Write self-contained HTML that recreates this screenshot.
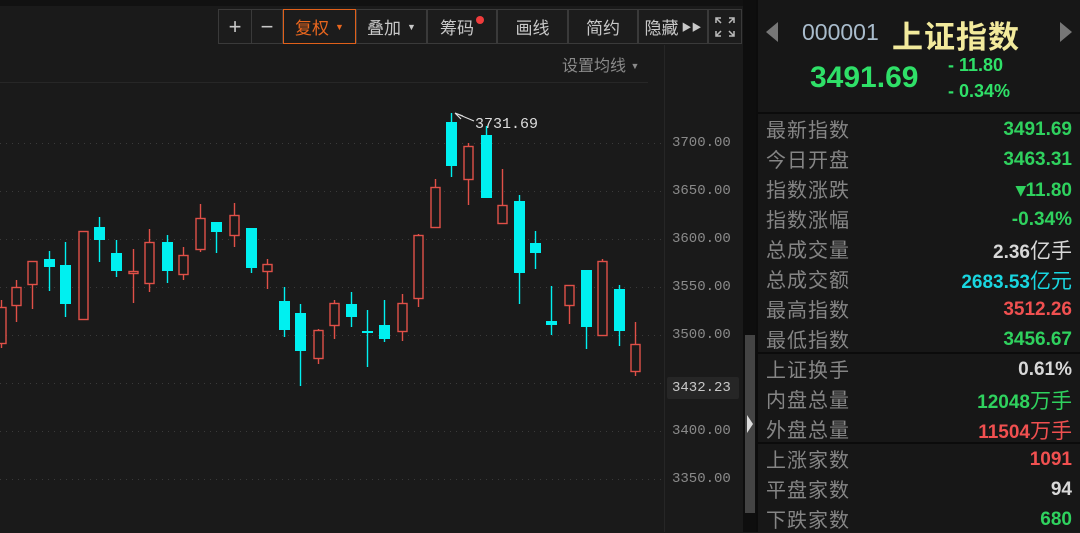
<!DOCTYPE html>
<html><head><meta charset="utf-8">
<style>
*{margin:0;padding:0;box-sizing:border-box}
body{width:1080px;height:532px;background:#1a1a1a;overflow:hidden;position:relative;font-family:"Liberation Sans","Noto Sans CJK SC",sans-serif}
.topbar{position:absolute;left:0;top:0;width:745px;height:6px;background:#111}
.tb{position:absolute;top:9px;height:35px;border:1px solid #3a3a3a;background:#1c1c1c;color:#c8c8c8;font-size:17px;display:flex;align-items:center;justify-content:center}
.tb.sel{border:1px solid #e0601a;color:#e8661e}
.caret{font-size:9px;margin-left:6px}
.ax{position:absolute;left:672px;color:#8a8a8a;font-family:"Liberation Mono",monospace;font-size:14px}
.rp{position:absolute;left:756px;top:0;width:324px;height:532px;background:#171717;border-left:2px solid #0c0c0c}
.row{position:absolute;left:8px;width:306px;height:30px;display:flex;justify-content:space-between;align-items:center}
.lb{color:#858585;font-size:20px;letter-spacing:1px}
.v{font-size:19px;font-weight:bold;position:relative;top:2px;font-family:"Liberation Sans","Noto Sans CJK SC",sans-serif}
.v span{vertical-align:baseline}
.g{color:#2fd15e}.r{color:#f05050}.w{color:#d8d8d8}.c{color:#19d6e0}
.sep{position:absolute;left:0;width:324px;height:2px;background:#0b0b0b}
</style></head><body>
<div class="topbar"></div>
<div class="tb" style="left:218px;width:34px;font-size:22px">+</div>
<div class="tb" style="left:251px;width:32px;font-size:22px">−</div>
<div class="tb sel" style="left:283px;width:73px">复权<span class="caret">▼</span></div>
<div class="tb" style="left:356px;width:71px">叠加<span class="caret">▼</span></div>
<div class="tb" style="left:427px;width:70px">筹码<span style="display:inline-block;width:8px;height:8px;border-radius:50%;background:#f03c3c;margin-left:2px;position:relative;top:-7px"></span></div>
<div class="tb" style="left:497px;width:71px">画线</div>
<div class="tb" style="left:568px;width:70px">简约</div>
<div class="tb" style="left:638px;width:70px">隐藏<span style="font-size:10px;margin-left:3px">▶▶</span></div>
<div class="tb" style="left:708px;width:34px">
<svg width="22" height="22" viewBox="0 0 22 22" stroke="#bbb" stroke-width="1.5" fill="none"><path d="M2 7V2h5M2 2l5 5M15 2h5v5M20 2l-5 5M2 15v5h5M2 20l5-5M15 20h5v-5M20 20l-5-5"/></svg></div>
<div style="position:absolute;left:562px;top:52px;color:#8a8a8a;font-size:16px">设置均线 <span style="font-size:9px;position:relative;top:-2px">▼</span></div>
<div style="position:absolute;left:0;top:82px;width:648px;height:1px;background:#272727"></div>
<div style="position:absolute;left:664px;top:45px;width:1px;height:487px;background:#262626"></div>
<div style="position:absolute;left:743px;top:0;width:14px;height:532px;background:#0e0e0e"></div>
<div style="position:absolute;left:745px;top:335px;width:10px;height:178px;background:#444"></div>
<div style="position:absolute;left:747px;top:415px;width:0;height:0;border-top:9px solid transparent;border-bottom:9px solid transparent;border-left:6px solid #ddd"></div>

<svg id="ch" style="position:absolute;left:0;top:0" width="665" height="532"></svg>
<div class="ax" style="top:135px">3700.00</div>
<div class="ax" style="top:183px">3650.00</div>
<div class="ax" style="top:231px">3600.00</div>
<div class="ax" style="top:279px">3550.00</div>
<div class="ax" style="top:327px">3500.00</div>
<div style="position:absolute;left:667px;top:377px;width:72px;height:22px;background:#262626;border-radius:2px"></div>
<div class="ax" style="top:380px;color:#c8c8c8">3432.23</div>
<div class="ax" style="top:423px">3400.00</div>
<div class="ax" style="top:471px">3350.00</div>

<div class="rp">
<div style="position:absolute;left:8px;top:22px;width:0;height:0;border-top:10px solid transparent;border-bottom:10px solid transparent;border-right:12px solid #777"></div>
<div style="position:absolute;left:302px;top:22px;width:0;height:0;border-top:10px solid transparent;border-bottom:10px solid transparent;border-left:12px solid #777"></div>
<div style="position:absolute;left:44px;top:19px;color:#a9bccc;font-size:23px">000001</div>
<div style="position:absolute;left:134px;top:12px;color:#f2ea9c;font-size:31px;font-weight:bold;letter-spacing:1px">上证指数</div>
<div style="position:absolute;left:52px;top:61px;color:#2fe068;font-size:30px;font-weight:bold">3491.69</div>
<div style="position:absolute;left:190px;top:55px;color:#2fe068;font-size:18px;font-weight:bold">- 11.80</div>
<div style="position:absolute;left:190px;top:81px;color:#2fe068;font-size:18px;font-weight:bold">- 0.34%</div>
<div class="sep" style="top:112px"></div>
<div class="row" style="top:113px"><span class="lb">最新指数</span><span class="v g">3491.69</span></div>
<div class="row" style="top:143px"><span class="lb">今日开盘</span><span class="v g">3463.31</span></div>
<div class="row" style="top:173px"><span class="lb">指数涨跌</span><span class="v g">▾11.80</span></div>
<div class="row" style="top:203px"><span class="lb">指数涨幅</span><span class="v g">-0.34%</span></div>
<div class="row" style="top:233px"><span class="lb">总成交量</span><span class="v w">2.36<span style="font-weight:normal;font-size:21px">亿手</span></span></div>
<div class="row" style="top:263px"><span class="lb">总成交额</span><span class="v c">2683.53<span style="font-weight:normal;font-size:21px">亿元</span></span></div>
<div class="row" style="top:293px"><span class="lb">最高指数</span><span class="v r">3512.26</span></div>
<div class="row" style="top:323px"><span class="lb">最低指数</span><span class="v g">3456.67</span></div>
<div class="sep" style="top:352px"></div>
<div class="row" style="top:353px"><span class="lb">上证换手</span><span class="v w">0.61%</span></div>
<div class="row" style="top:383px"><span class="lb">内盘总量</span><span class="v g">12048<span style="font-weight:normal;font-size:21px">万手</span></span></div>
<div class="row" style="top:413px"><span class="lb">外盘总量</span><span class="v r">11504<span style="font-weight:normal;font-size:21px">万手</span></span></div>
<div class="sep" style="top:442px"></div>
<div class="row" style="top:443px"><span class="lb">上涨家数</span><span class="v r">1091</span></div>
<div class="row" style="top:473px"><span class="lb">平盘家数</span><span class="v w">94</span></div>
<div class="row" style="top:503px"><span class="lb">下跌家数</span><span class="v g">680</span></div>
</div>

<script>
var d=[
[1,'r',307,343,300,348],[16,'r',287,305,280,322],[32,'r',261,284,261,309],[49,'c',259,267,251,291],
[65,'c',265,304,242,317],[83,'r',231,319,231,319],[99,'c',227,240,217,262],[116,'c',253,271,240,277],
[133,'r',271,273,249,303],[149,'r',242,283,229,292],[167,'c',242,271,235,283],[183,'r',255,274,247,280],
[200,'r',218,249,204,252],[216,'c',222,232,222,253],[234,'r',215,235,203,247],[251,'c',228,268,228,273],
[267,'r',264,271,259,289],[284,'c',301,330,287,337],[300,'c',313,351,304,386],[318,'r',330,358,329,364],
[334,'r',303,325,300,339],[351,'c',304,317,292,327],[367,'c',331,333,310,367],[384,'c',325,339,300,342],
[402,'r',303,331,294,341],[418,'r',235,298,234,307],[435,'r',187,227,179,227],[451,'c',122,166,113,177],
[468,'r',146,179,143,205],[486,'c',135,198,126,198],[502,'r',205,223,169,223],[519,'c',201,273,195,304],
[535,'c',243,253,231,269],[551,'c',321,325,286,335],[569,'r',285,305,285,324],[586,'c',270,327,270,349],
[602,'r',261,335,259,335],[619,'c',289,331,285,346],[635,'r',344,371,322,376]];
var s='';
[143,191,239,287,335,383,431,479].forEach(function(y){s+='<line x1="0" y1="'+(y+.5)+'" x2="664" y2="'+(y+.5)+'" stroke="#3a3a3a" stroke-dasharray="1,5"/>';});
d.forEach(function(c){var x=c[0],col=c[1]=='r'?'#e05048':'#00f0f0';
s+='<line x1="'+(x+.5)+'" y1="'+c[4]+'" x2="'+(x+.5)+'" y2="'+c[5]+'" stroke="'+col+'" stroke-width="1.4"/>';
if(c[1]=='r')s+='<rect x="'+(x-4)+'" y="'+(c[2]+.5)+'" width="9" height="'+Math.max(1,c[3]-c[2])+'" fill="#1a1a1a" stroke="'+col+'" stroke-width="1.4"/>';
else s+='<rect x="'+(x-5)+'" y="'+c[2]+'" width="11" height="'+Math.max(2,c[3]-c[2])+'" fill="'+col+'"/>';});
s+='<path d="M455 113 L463 116 M455 113 L461 119 M455 113 L474 121" stroke="#ddd" stroke-width="1.2" fill="none"/>';
s+='<text x="475" y="128" fill="#ddd" font-family="Liberation Mono,monospace" font-size="15">3731.69</text>';
document.getElementById('ch').innerHTML=s;
</script>
</body></html>
